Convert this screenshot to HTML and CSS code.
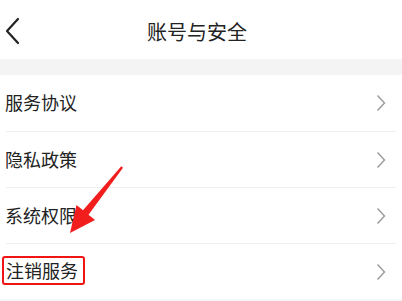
FILE: index.html
```html
<!DOCTYPE html>
<html>
<head>
  <meta charset="utf-8">
  <title>账号与安全</title>
  <link rel="stylesheet" href="styles.css">
</head>
<body>
  <div class="page">
    <div class="header">
      <svg class="backIcon" width="16" height="28" viewBox="0 0 16 28">
        <polyline points="14,2 3,14 14,26" fill="none" stroke="#222" stroke-width="2.2" stroke-linecap="round" stroke-linejoin="round"/>
      </svg>
      <div class="title">账号与安全</div>
    </div>
    <div class="gap"></div>

    <div class="list">
      <div class="row first">
        <span class="label">服务协议</span>
        <svg class="chevron" width="10" height="18" viewBox="0 0 10 18"><polyline points="1.5,1.5 8.5,9 1.5,16.5" fill="none" stroke="#999" stroke-width="1.4"/></svg>
      </div>
      <div class="row">
        <span class="label">隐私政策</span>
        <svg class="chevron" width="10" height="18" viewBox="0 0 10 18"><polyline points="1.5,1.5 8.5,9 1.5,16.5" fill="none" stroke="#999" stroke-width="1.4"/></svg>
      </div>
      <div class="row">
        <span class="label">系统权限</span>
        <svg class="chevron" width="10" height="18" viewBox="0 0 10 18"><polyline points="1.5,1.5 8.5,9 1.5,16.5" fill="none" stroke="#999" stroke-width="1.4"/></svg>
      </div>
      <div class="row">
        <span class="label marked">注销服务</span>
        <svg class="chevron" width="10" height="18" viewBox="0 0 10 18"><polyline points="1.5,1.5 8.5,9 1.5,16.5" fill="none" stroke="#999" stroke-width="1.4"/></svg>
      </div>
    </div>
    <div class="bottom"></div>

    <!-- annotation arrow over the list -->
    <svg class="arrow" width="402" height="301" viewBox="0 0 402 301">
      <polygon points="121.3,166.3 123,167.8 88.5,214.8 95,220 70,233 76.5,205 83,210.2" fill="#f21d1d"/>
    </svg>
  </div>
</body>
</html>
```

FILE: styles.css
```css
body {
  margin: 0;
  background: #fff;
  font-family: "Noto Sans CJK SC", "Noto Sans", sans-serif;
  color: #222;
}

.page {
  position: relative;
  width: 402px;
  height: 301px;
  overflow: hidden;
}

.header {
  height: 59px;
  display: flex;
  align-items: center;
  justify-content: center;
  position: relative;
}

.backIcon {
  position: absolute;
  left: 4px;
  top: 17px;
}

.title {
  font-size: 20px;
  margin-left: -8px;
  margin-top: 3px;
}

.gap {
  height: 16px;
  background: #f4f4f4;
}

.row {
  height: 55px;
  display: flex;
  align-items: center;
  justify-content: space-between;
  margin: 0 6px;
  padding-right: 10px;
  border-top: 1px solid #efefef;
}

.row.first {
  height: 56px;
  margin-left: 0;
  padding-left: 5px;
  border-top: none;
}

.label {
  font-size: 18px;
  margin-top: -2px;
  margin-left: -1px;
}

.row.first .label {
  margin-left: 0;
}

.marked {
  border: 2px solid #f01414;
  border-radius: 3px;
  padding: 0 5px 0 2px;
  line-height: 25px;
  margin-left: -4px;
}

.chevron {
  display: block;
}

.bottom {
  height: 10px;
  background: #f4f4f4;
}

.arrow {
  position: absolute;
  left: 0;
  top: 0;
}
```
